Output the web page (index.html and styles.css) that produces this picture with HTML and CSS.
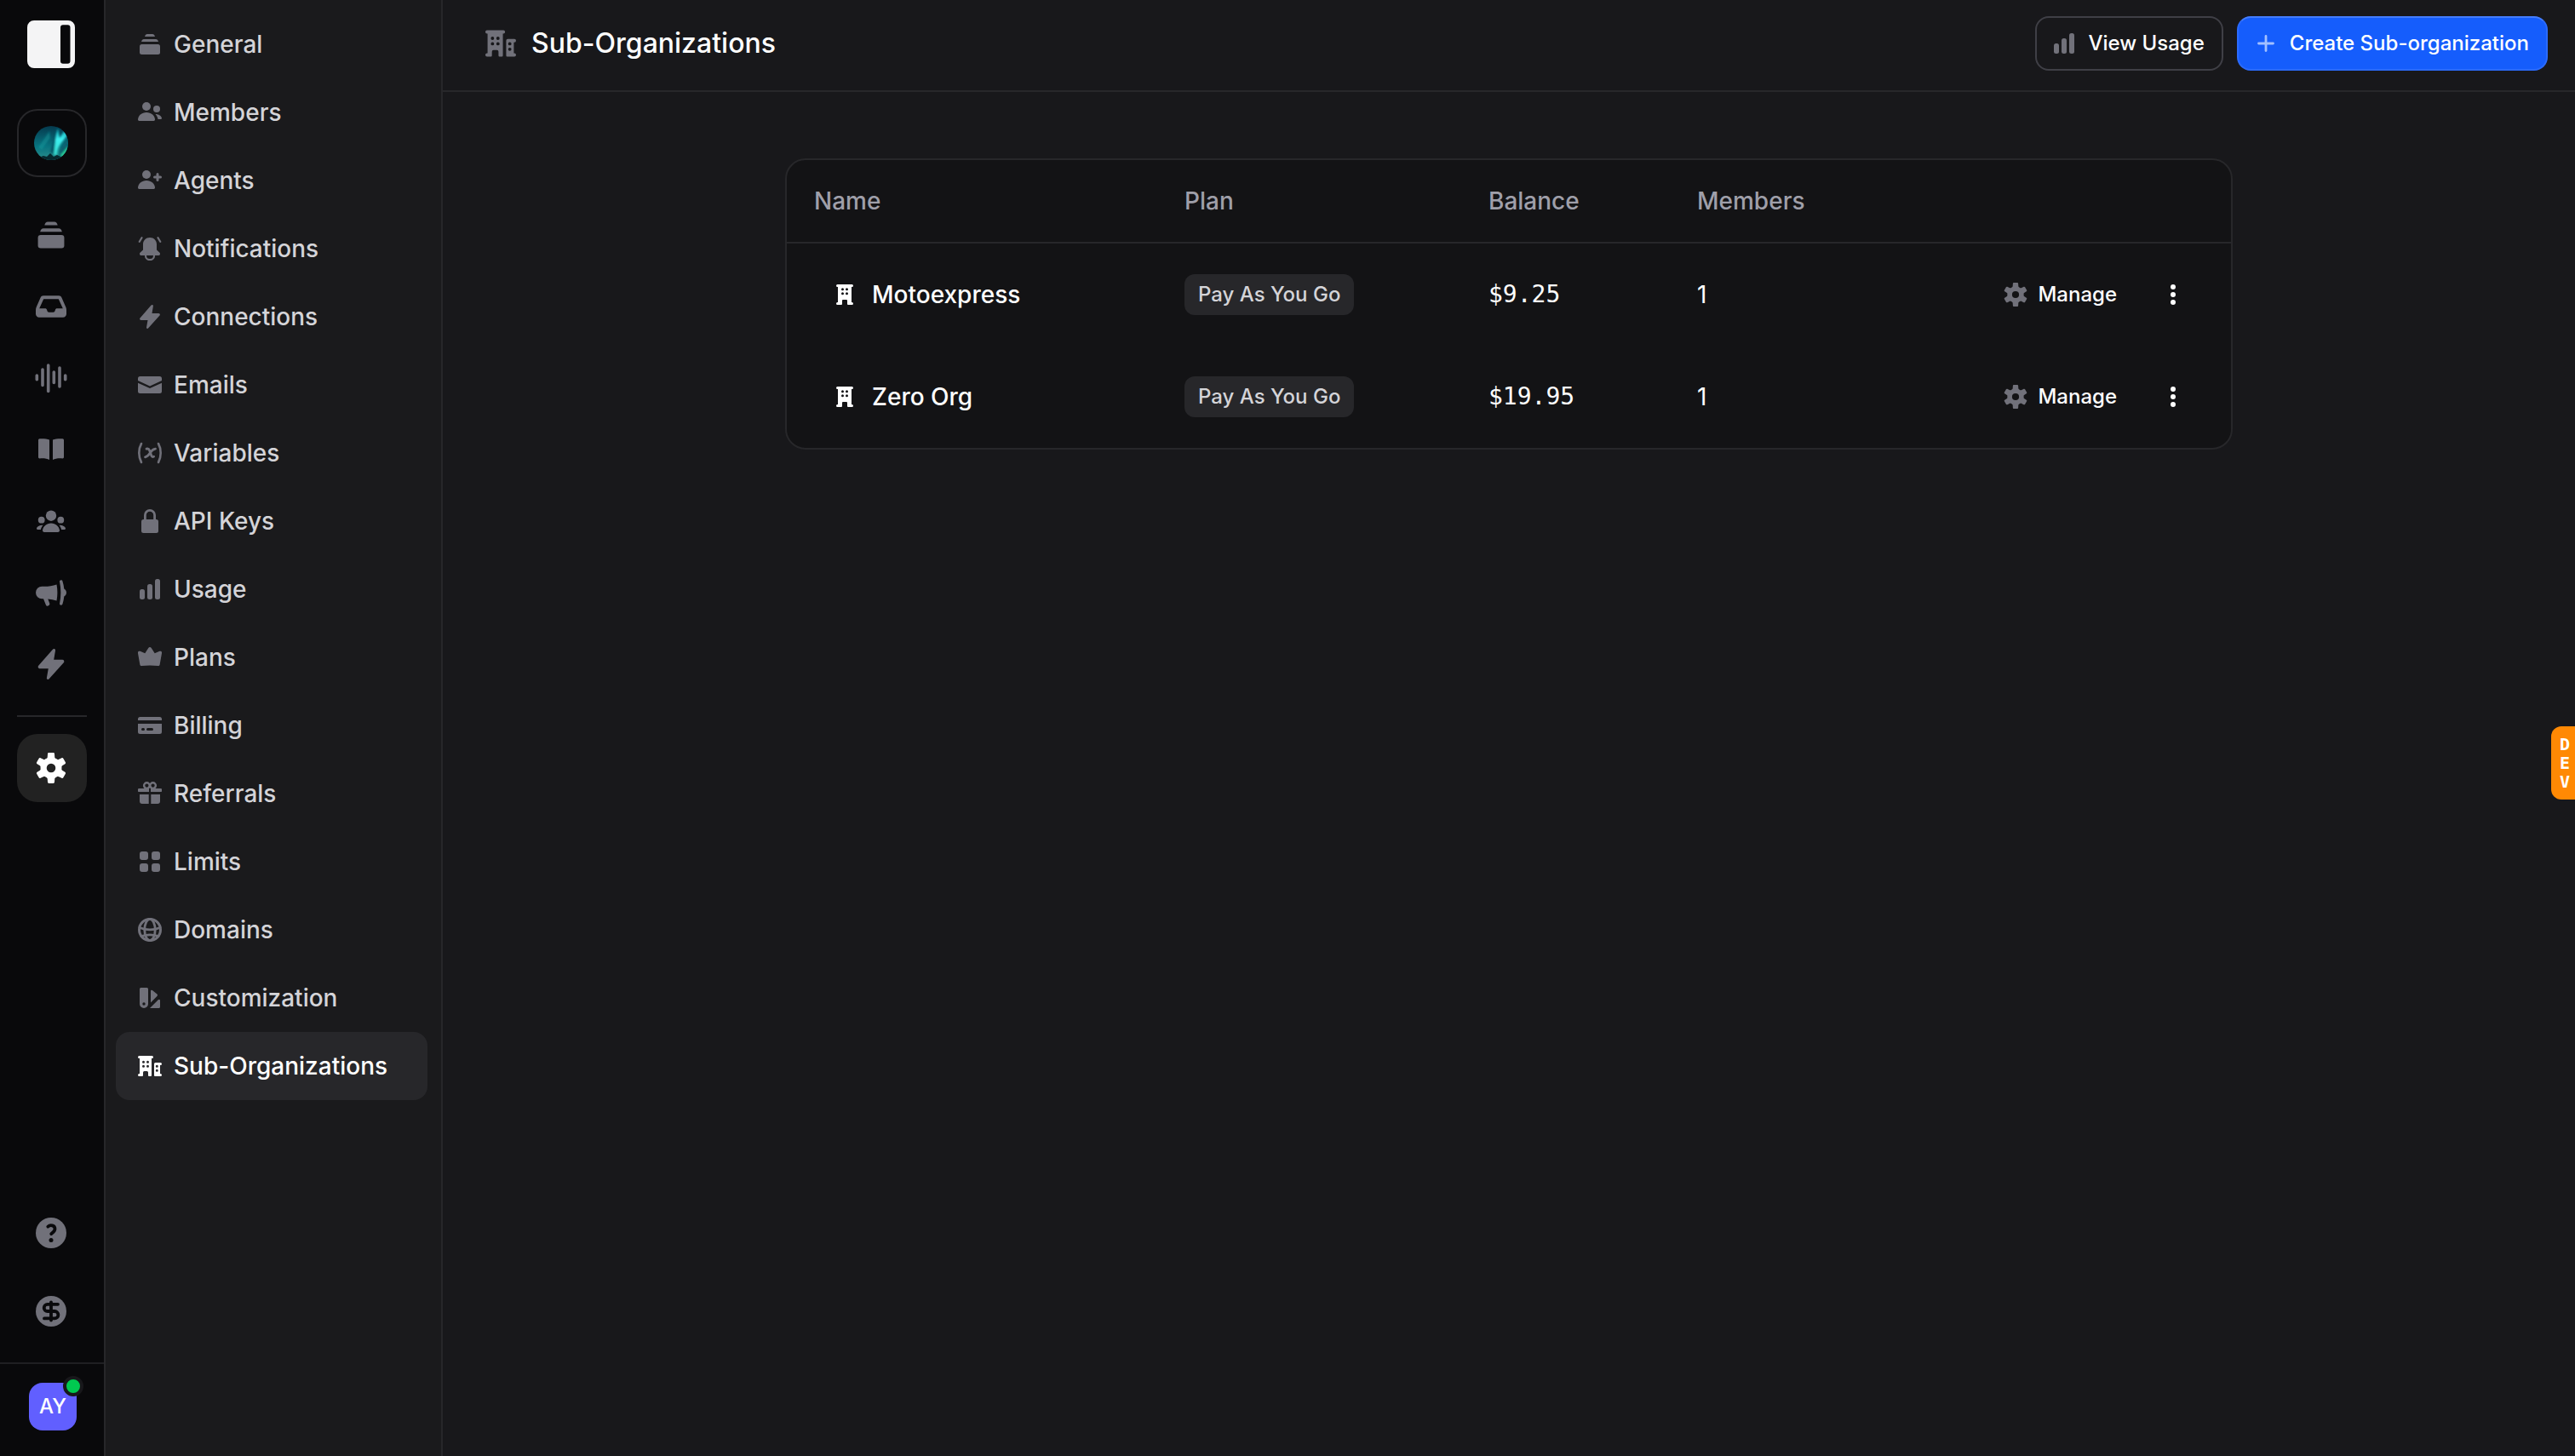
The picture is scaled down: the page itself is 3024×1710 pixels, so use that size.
FILE: index.html
```
<!DOCTYPE html>
<html lang="en">

<head>
	<meta charset="UTF-8">
	<meta name="viewport" content="width=device-width, initial-scale=1.0">
	<title>Sub-Organizations</title>
	<link rel="stylesheet" href="styles.css">
</head>

<body>
	<!-- Icon sprite -->
	<svg class="sprite" aria-hidden="true">
		<symbol id="i-stack" viewBox="0 0 28 28">
			<path d="M8 5c.5-2 1.500-3 3-3h6c1.500 0 2.500 1 3 3zM4 11c.5-2 1.500-3 3-3h14c1.500 0 2.500 1 3 3z" />
			<rect x="2" y="14" width="24" height="12" rx="2.500" />
		</symbol>
		<symbol id="i-members" viewBox="0 0 28 28">
			<circle cx="10" cy="7" r="5" />
			<path d="M10 14c-5.500 0-10 4-10 8.600 0 .8.6 1.400 1.400 1.400h17.200c.8 0 1.400-.6 1.400-1.400C20 18 15.500 14 10 14z" />
			<circle cx="22" cy="10" r="4" />
			<path d="M20.500 16c4 0 7 2.200 7.500 4.700.1.800-.4 1.300-1.200 1.300h-3.300c-.4-2.400-1.500-4.500-3-6z" />
		</symbol>
		<symbol id="i-agents" viewBox="0 0 28 28">
			<circle cx="10" cy="7" r="5" />
			<path d="M10 14c-5.500 0-10 4-10 8.600 0 .8.6 1.400 1.400 1.400h17.200c.8 0 1.400-.6 1.400-1.400C20 18 15.500 14 10 14z" />
			<path class="line" stroke-width="3" d="M23 6.500v7M19.500 10h7" />
		</symbol>
		<symbol id="i-bell" viewBox="0 0 28 28">
			<path d="M14 1c-4.600 0-8 3.500-8 8v6.500l-3.500 3.300c-1.200 1.300-.4 3.200 1.200 3.200h20.600c1.600 0 2.400-1.900 1.200-3.200L22 15.500V9c0-4.500-3.400-8-8-8z" />
			<path class="line" stroke-width="2.200" d="M9 22.500a5 4.600 0 0 0 10 0M4.500 1.200 1.800 5.800M23.500 1.200l2.700 4.600" />
		</symbol>
		<symbol id="i-bolt" viewBox="0 0 28 28">
			<path d="M15.500.6 2.500 15.400C1.600 16.500 2.200 18 3.600 18H11.500l-1.500 8.600c-.2 1.200 1.200 1.900 2 1L25.500 12.600c.9-1 .2-2.600-1.200-2.600H16.500L17.900 1.500C18.100.1 16.400-.5 15.500.6z" />
		</symbol>
		<symbol id="i-mail" viewBox="0 0 28 28">
			<path d="M0 9V6.500A2.500 2.500 0 0 1 2.500 4h23A2.500 2.500 0 0 1 28 6.500V9l-14 6.500z" />
			<path d="m0 11.800 14 6.200 14-6.200v9.700a2.500 2.500 0 0 1-2.500 2.500h-23A2.500 2.500 0 0 1 0 21.500z" />
		</symbol>
		<symbol id="i-variable" viewBox="0 0 28 28">
			<path class="line" stroke-width="2.600" d="M4 3C.4 9.500.4 18.500 4 25M24 3c3.600 6.500 3.600 15.500 0 22" />
			<path class="line" stroke-width="2.800" d="M10 9.200c2-.6 3 .3 3.600 1.900l2 5.400c.5 1.500 1.200 2.500 3 1.800M20.500 9.200c-3 .3-4.500 2-6.300 4.800s-3 4.300-5.700 4.800" />
		</symbol>
		<symbol id="i-lock" viewBox="0 0 28 28">
			<rect x="4" y="12" width="20" height="16" rx="2.500" />
			<path class="line" stroke-width="2.800" d="M8.400 14V7a5.600 5.600 0 0 1 11.200 0v7" />
		</symbol>
		<symbol id="i-chart" viewBox="0 0 28 28">
			<rect x="2" y="14" width="6" height="12" rx="2.500" />
			<rect x="11" y="8" width="6" height="18" rx="2.500" />
			<rect x="20" y="2" width="6" height="24" rx="2.500" />
		</symbol>
		<symbol id="i-crown" viewBox="0 0 28 28">
			<path d="M12.300 2.900c.8-1.200 2.600-1.200 3.400 0l4 6.400 5.800-2.500c1.400-.6 2.900.5 2.600 2l-2.500 13.900c-.2 1-1.100 1.600-2.100 1.400-6.300-.8-12.700-.8-19 0-1 .2-1.900-.4-2.100-1.400L-.1 8.800c-.3-1.500 1.200-2.600 2.600-2l5.800 2.500z" />
		</symbol>
		<symbol id="i-card" viewBox="0 0 28 28">
			<path d="M0 8V6.500A2.500 2.500 0 0 1 2.500 4h23A2.500 2.500 0 0 1 28 6.500V8z" />
			<path fill-rule="evenodd" d="M0 12h28v9.500a2.500 2.500 0 0 1-2.500 2.500h-23A2.500 2.500 0 0 1 0 21.500zM5.500 17a1.500 1.500 0 0 0 0 3h1a1.500 1.500 0 0 0 0-3zM11.500 17a1.500 1.500 0 0 0 0 3h5a1.500 1.500 0 0 0 0-3z" />
		</symbol>
		<symbol id="i-gift" viewBox="0 0 28 28">
			<path d="M1.500 8H13v4H1.500a2 2 0 0 1 0-4zM15 8h11.500a2 2 0 0 1 0 4H15zM2 15h10.700v11H5a3 3 0 0 1-3-3zM15.300 15H26v8a3 3 0 0 1-3 3h-7.700z" />
			<circle class="line" stroke-width="2.400" cx="10.400" cy="4.600" r="3.300" />
			<circle class="line" stroke-width="2.400" cx="17.600" cy="4.600" r="3.300" />
		</symbol>
		<symbol id="i-grid" viewBox="0 0 28 28">
			<rect x="2" y="2" width="10" height="10" rx="3" />
			<rect x="16" y="2" width="10" height="10" rx="3" />
			<rect x="2" y="16" width="10" height="10" rx="3" />
			<rect x="16" y="16" width="10" height="10" rx="3" />
		</symbol>
		<symbol id="i-globe" viewBox="0 0 28 28">
			<circle class="line" stroke-width="3" cx="14" cy="14" r="12.500" />
			<ellipse class="line" stroke-width="2.800" cx="14" cy="14" rx="6.200" ry="12.600" />
			<path class="line" stroke-width="2.800" d="M2 11.500c7.500 3 16.500 3 24 0M4 21.500c6.500-2.200 13.500-2.200 20 0" />
		</symbol>
		<symbol id="i-swatch" viewBox="0 0 28 28">
			<path fill-rule="evenodd" d="M3.500 2h7A1.500 1.500 0 0 1 12 3.500V21a5 5 0 0 1-10 0V3.500A1.500 1.500 0 0 1 3.500 2zM7 19.300a1.700 1.700 0 1 0 0 3.400 1.700 1.700 0 0 0 0-3.400z" />
			<path d="M15 6c0-1.300 1.300-1.600 2.200-.7l5.200 4.200c.8.7.8 1.600 0 2.400L15 19.500zM14 26l9.300-9.300c.6-.6 1-.7 1.700-.7.700 0 1 .5 1 1.200v7.300c0 .9-.6 1.500-1.500 1.500z" />
		</symbol>
		<symbol id="i-buildings" viewBox="0 0 28 28">
			<path fill-rule="evenodd" d="M1.500 2h15a1.500 1.500 0 0 1 0 3H16v20a1 1 0 0 1-1 1h-2a1 1 0 0 1-1-1v-3.500A1.500 1.500 0 0 0 10.500 20h-3A1.500 1.500 0 0 0 6 21.500V25a1 1 0 0 1-1 1H1.500a1.500 1.500 0 0 1 0-3H2V5h-.5a1.500 1.500 0 0 1 0-3zM6.500 7.800a1.500 1.500 0 1 0 0 3 1.500 1.500 0 0 0 0-3zM11.500 7.800a1.500 1.500 0 1 0 0 3 1.500 1.500 0 0 0 0-3zM6.500 12.800a1.500 1.500 0 1 0 0 3 1.500 1.500 0 0 0 0-3zM11.500 12.800a1.500 1.500 0 1 0 0 3 1.500 1.500 0 0 0 0-3z" />
			<path fill-rule="evenodd" d="M20.500 10h6a1.500 1.500 0 0 1 0 3H26v10h.5a1.500 1.500 0 0 1 0 3H20a1 1 0 0 1-1-1V11.500a1.500 1.500 0 0 1 1.500-1.500zM22.300 12.800a1.500 1.500 0 1 0 0 3 1.500 1.500 0 0 0 0-3zM22.300 17.800a1.500 1.500 0 1 0 0 3 1.500 1.500 0 0 0 0-3z" />
		</symbol>
		<symbol id="i-office" viewBox="0 0 28 28">
			<path fill-rule="evenodd" d="M5.500 2h17a1.500 1.500 0 0 1 0 3H22v18h.5a1.500 1.500 0 0 1 0 3H18a1 1 0 0 1-1-1v-4a1 1 0 0 0-1-1h-4a1 1 0 0 0-1 1v4a1 1 0 0 1-1 1H5.500a1.500 1.500 0 0 1 0-3H6V5h-.5a1.500 1.500 0 0 1 0-3zM11.500 6.300a1.500 1.500 0 1 0 0 3 1.500 1.500 0 0 0 0-3zM16.500 6.300a1.500 1.500 0 1 0 0 3 1.500 1.500 0 0 0 0-3zM11.500 11.300a1.500 1.500 0 1 0 0 3 1.500 1.500 0 0 0 0-3zM16.500 11.300a1.500 1.500 0 1 0 0 3 1.500 1.500 0 0 0 0-3z" />
		</symbol>
		<symbol id="i-gear" viewBox="0 0 28 28">
			<circle class="line" stroke-width="5.600" cx="14" cy="14" r="6.900" />
			<g id="teeth">
				<path id="tooth" d="M9 6.500c1.300-.8 1.600-1.400 1.700-2.700l.2-2.700C11 .4 11.300 0 12 0h4c.7 0 1 .4 1.100 1.100l.2 2.700c.1 1.300.4 1.900 1.700 2.700z" />
				<use href="#tooth" transform="rotate(60 14 14)" />
				<use href="#tooth" transform="rotate(120 14 14)" />
				<use href="#tooth" transform="rotate(180 14 14)" />
				<use href="#tooth" transform="rotate(240 14 14)" />
				<use href="#tooth" transform="rotate(300 14 14)" />
			</g>
		</symbol>
		<symbol id="i-dots" viewBox="0 0 28 28">
			<circle cx="14" cy="5" r="3" />
			<circle cx="14" cy="14" r="3" />
			<circle cx="14" cy="23" r="3" />
		</symbol>
		<symbol id="i-plus" viewBox="0 0 28 28">
			<path class="line" stroke-width="2.800" d="M14 5.500v17M5.500 14h17" />
		</symbol>
		<symbol id="i-inbox" viewBox="0 0 36 36">
			<path fill-rule="evenodd" d="M9 5.300h18c1.600 0 2.800.8 3.400 2.200L35 18c.7 1.500 1 2.600 1 4v4.700c0 2.300-1.700 4-4 4H4c-2.300 0-4-1.700-4-4V22c0-1.400.3-2.500 1-4L5.600 7.500C6.200 6.100 7.400 5.300 9 5.300zM9.200 9.300l-5 11H11c1.200 0 1.700.6 2.200 1.900.6 1.800 1 2.500 2.400 2.500h4.800c1.400 0 1.800-.7 2.400-2.500.5-1.300 1-1.900 2.200-1.900h6.800l-5-11z" />
		</symbol>
		<symbol id="i-wave" viewBox="0 0 36 36" overflow="visible">
			<path class="line" stroke-width="3.600" d="M1.300 15v4.700M8 8v18.500M14.700 3v30.500M21.300 11v12.500M28 6v22M34.700 15v4.700" />
		</symbol>
		<symbol id="i-book" viewBox="0 0 36 36">
			<path d="M3 7c0-1 .6-1.600 1.600-1.700C9 5 13 5.400 16 6.600V30c-3-1.600-7-2-11.400-1.600-1 0-1.600-.6-1.600-1.600zM33 7c0-1-.6-1.600-1.600-1.700C27 5 23 5.400 20 6.600V30c3-1.600 7-2 11.400-1.600 1 0 1.600-.6 1.600-1.600z" />
		</symbol>
		<symbol id="i-group" viewBox="0 0 36 36">
			<circle cx="18" cy="11.700" r="6.200" />
			<circle cx="6.700" cy="16.700" r="3.900" />
			<circle cx="29.300" cy="16.700" r="3.900" />
			<path d="M18 20.500c-5.300 0-9.400 3.800-10 8.300-.1 1.300.7 2.200 2 2.200h16c1.300 0 2.100-.9 2-2.200-.6-4.500-4.700-8.300-10-8.300zM8.500 22.800c-4.200-.2-7 1.600-7.500 3.800-.2.900.4 1.400 1.300 1.400h3.600c.4-2 1.300-3.700 2.600-5.200zM27.500 22.800c4.200-.2 7 1.600 7.500 3.800.2.900-.4 1.400-1.300 1.400h-3.600c-.4-2-1.300-3.700-2.600-5.200z" />
		</symbol>
		<symbol id="i-megaphone" viewBox="0 0 36 36">
			<path d="M7.300 10.700C13 11 19 10.500 24.500 8.500c1.200 6.300 1.200 12.700 0 19-3.300-1.200-6.700-1.900-10.200-2.100l1.900 5.200c.4 1 .1 1.800-.8 2.400l-1 .6c-1 .5-2 .2-2.400-.8L9 25.300H7.300a7.300 7.300 0 0 1 0-14.600z" />
			<path d="M28 5c-.3-1.700 2.700-2.600 3.400-.6 1 3 1.600 6 1.900 9.100 1.400.9 2.700 2.500 2.700 4.500s-1.300 3.600-2.700 4.500c-.3 3.100-.9 6.100-1.900 9.100-.7 2-3.700 1.100-3.400-.6 1.800-8.700 1.800-17.300 0-26z" />
		</symbol>
		<symbol id="i-help" viewBox="0 0 36 36">
			<circle cx="18" cy="18" r="18" />
			<path class="cut" d="M14.300 10.600c3-2.800 8.200-1.200 8.200 2.600 0 3-2.500 4.200-4.300 5.900" />
			<circle class="cut-dot" cx="18" cy="26.500" r="2.500" />
		</symbol>
		<symbol id="i-dollar" viewBox="0 0 36 36">
			<circle cx="18" cy="18" r="18" />
			<path class="cut" d="M18 7.500v21M26 9.800H13.800a4.100 4.100 0 0 0 0 8.200h8.400a4.200 4.200 0 0 1 0 8.400H10" />
		</symbol>
		<symbol id="i-logo" viewBox="0 0 56 56">
			<path fill-rule="evenodd" d="M8 0h40a8 8 0 0 1 8 8v40a8 8 0 0 1-8 8H8a8 8 0 0 1-8-8V8a8 8 0 0 1 8-8zM42 5.300a3 3 0 0 0-3 3v39.400a3 3 0 0 0 3 3h5.500a3 3 0 0 0 3-3V8.300a3 3 0 0 0-3-3z" />
		</symbol>
	</svg>

	<div class="app">
		<!-- Icon rail -->
		<nav class="rail" aria-label="Workspace">
			<a class="logo" href="#" aria-label="Home"><svg><use href="#i-logo" /></svg></a>
			<button class="workspace" type="button" aria-label="Switch workspace">
				<svg class="aurora" viewBox="0 0 40 40">
					<defs>
						<linearGradient id="sky" x1="0" y1="0" x2="0" y2="1">
							<stop offset="0" stop-color="#053a4e" />
							<stop offset=".6" stop-color="#087480" />
							<stop offset="1" stop-color="#2a8f8c" />
						</linearGradient>
						<linearGradient id="glow" x1="0" y1="0" x2="0" y2="1">
							<stop offset="0" stop-color="#0a9bab" />
							<stop offset=".4" stop-color="#3df0f0" />
							<stop offset="1" stop-color="#35d8cc" />
						</linearGradient>
						<clipPath id="disc"><circle cx="20" cy="20" r="20" /></clipPath>
						<filter id="soft"><feGaussianBlur stdDeviation="1" /></filter>
					</defs>
					<g clip-path="url(#disc)">
						<rect width="40" height="40" fill="url(#sky)" />
						<g filter="url(#soft)">
							<path fill="#0f9a9d" opacity=".5" d="M18 6 5 25l4 3 10-14z" />
							<path fill="#04475c" opacity=".7" d="m27 0-5 20-3 10 4 4 4-20 5-14z" />
							<path fill="url(#glow)" d="M28 3c-3 8-3 16-5 31h4c0-6 2-10 5-14l7-9-3-6-6 9z" />
							<path fill="#076070" d="m40 14-9 12-2 10h8z" />
							<path fill="#28c995" d="m40 24-9 10 2 3h7z" />
						</g>
						<path fill="#06292f" d="m5 37 6-2 4 1 4-4 4 4 4-2 6 3 4 3H5z" />
					</g>
				</svg>
			</button>

			<div class="rail-links">
				<a href="#" aria-label="Overview"><svg class="icon-lg"><use href="#i-stack" /></svg></a>
				<a href="#" aria-label="Inbox"><svg class="icon-lg"><use href="#i-inbox" /></svg></a>
				<a href="#" aria-label="Calls"><svg class="icon-lg"><use href="#i-wave" /></svg></a>
				<a href="#" aria-label="Knowledge"><svg class="icon-lg"><use href="#i-book" /></svg></a>
				<a href="#" aria-label="Contacts"><svg class="icon-lg"><use href="#i-group" /></svg></a>
				<a href="#" aria-label="Campaigns"><svg class="icon-lg"><use href="#i-megaphone" /></svg></a>
				<a href="#" aria-label="Automations"><svg class="icon-lg"><use href="#i-bolt" /></svg></a>
			</div>
			<hr>
			<div class="rail-links">
				<a class="active" href="#" aria-label="Settings"><svg class="icon-lg"><use href="#i-gear" /></svg></a>
			</div>

			<div class="rail-help">
				<a href="#" aria-label="Help"><svg class="icon-lg"><use href="#i-help" /></svg></a>
				<a href="#" aria-label="Balance"><svg class="icon-lg"><use href="#i-dollar" /></svg></a>
			</div>
			<div class="rail-user">
				<button class="user" type="button">AY<span class="online"></span></button>
			</div>
		</nav>

		<!-- Settings menu -->
		<nav class="menu" aria-label="Settings">
			<a href="#"><svg class="icon"><use href="#i-stack" /></svg>General</a>
			<a href="#"><svg class="icon"><use href="#i-members" /></svg>Members</a>
			<a href="#"><svg class="icon"><use href="#i-agents" /></svg>Agents</a>
			<a href="#"><svg class="icon"><use href="#i-bell" /></svg>Notifications</a>
			<a href="#"><svg class="icon"><use href="#i-bolt" /></svg>Connections</a>
			<a href="#"><svg class="icon"><use href="#i-mail" /></svg>Emails</a>
			<a href="#"><svg class="icon"><use href="#i-variable" /></svg>Variables</a>
			<a href="#"><svg class="icon"><use href="#i-lock" /></svg>API Keys</a>
			<a href="#"><svg class="icon"><use href="#i-chart" /></svg>Usage</a>
			<a href="#"><svg class="icon"><use href="#i-crown" /></svg>Plans</a>
			<a href="#"><svg class="icon"><use href="#i-card" /></svg>Billing</a>
			<a href="#"><svg class="icon"><use href="#i-gift" /></svg>Referrals</a>
			<a href="#"><svg class="icon"><use href="#i-grid" /></svg>Limits</a>
			<a href="#"><svg class="icon"><use href="#i-globe" /></svg>Domains</a>
			<a href="#"><svg class="icon"><use href="#i-swatch" /></svg>Customization</a>
			<a class="active" href="#" aria-current="page"><svg class="icon"><use href="#i-buildings" /></svg>Sub-Organizations</a>
		</nav>

		<main class="main">
			<header class="header">
				<h1><svg class="icon-lg"><use href="#i-buildings" /></svg>Sub-Organizations</h1>
				<button class="btn" type="button"><svg class="icon"><use href="#i-chart" /></svg>View Usage</button>
				<button class="btn btn-primary" type="button"><svg class="icon"><use href="#i-plus" /></svg>Create Sub-organization</button>
			</header>

			<div class="content">
				<div class="card">
					<table>
						<thead>
							<tr>
								<th class="col-name">Name</th>
								<th class="col-plan">Plan</th>
								<th class="col-balance">Balance</th>
								<th>Members</th>
								<th aria-label="Actions"></th>
							</tr>
						</thead>
						<tbody>
							<tr>
								<td><a class="org" href="#"><svg class="icon"><use href="#i-office" /></svg>Motoexpress</a></td>
								<td><span class="tag">Pay As You Go</span></td>
								<td class="mono">$9.25</td>
								<td>1</td>
								<td>
									<div class="actions">
										<button class="manage" type="button"><svg class="icon"><use href="#i-gear" /></svg>Manage</button>
										<button class="more" type="button" aria-label="More actions"><svg class="icon"><use href="#i-dots" /></svg></button>
									</div>
								</td>
							</tr>
							<tr>
								<td><a class="org" href="#"><svg class="icon"><use href="#i-office" /></svg>Zero Org</a></td>
								<td><span class="tag">Pay As You Go</span></td>
								<td class="mono">$19.95</td>
								<td>1</td>
								<td>
									<div class="actions">
										<button class="manage" type="button"><svg class="icon"><use href="#i-gear" /></svg>Manage</button>
										<button class="more" type="button" aria-label="More actions"><svg class="icon"><use href="#i-dots" /></svg></button>
									</div>
								</td>
							</tr>
						</tbody>
					</table>
				</div>
			</div>
		</main>
	</div>

	<div class="dev"><span>D</span><span>E</span><span>V</span></div>
</body>

</html>
```
FILE: styles.css
```
* {
	box-sizing: border-box;
}

body {
	margin: 0;
	font-family: Inter, "Liberation Sans", sans-serif;
	font-size: 28px;
	line-height: 40px;
	color: #fff;
	background-color: #18181b;
}

a {
	color: inherit;
	text-decoration: none;
}

button {
	padding: 0;
	border: none;
	background: none;
	font: inherit;
	color: inherit;
	cursor: pointer;
}

.sprite {
	position: absolute;
	width: 0;
	height: 0;
}

.icon,
.icon-lg {
	flex: none;
	display: block;
	width: 28px;
	height: 28px;
	fill: currentColor;
	color: #71717a;
	overflow: visible;
}

.icon-lg {
	width: 36px;
	height: 36px;
}

.line {
	fill: none;
	stroke: currentColor;
	stroke-linecap: round;
	stroke-linejoin: round;
}

.cut {
	fill: none;
	stroke: #09090b;
	stroke-width: 3.8;
	stroke-linecap: round;
	stroke-linejoin: round;
}

.cut-dot {
	fill: #09090b;
}

.app {
	display: flex;
	min-height: 100vh;
}

/* Icon rail */
.rail {
	flex: none;
	display: flex;
	flex-direction: column;
	width: 124px;
	background-color: #09090b;
	border-right: 2px solid #27272a;
}

.logo {
	margin: 24px 32px 48px;
}

.logo svg {
	display: block;
	width: 56px;
	height: 56px;
	fill: #f4f4f5;
}

.workspace {
	display: flex;
	align-items: center;
	height: 80px;
	margin: 0 20px 28px;
	padding-left: 18px;
	border: 2px solid #27272a;
	border-radius: 24px;
}

.aurora {
	width: 40px;
	height: 40px;
}

.rail-links {
	display: flex;
	flex-direction: column;
	gap: 4px;
	padding: 0 20px;
}

.rail-links a {
	display: flex;
	align-items: center;
	height: 80px;
	padding-left: 22px;
	border-radius: 24px;
}

.rail-links .active {
	background-color: #222;
}

.rail-links .active svg {
	color: #fff;
}

.rail hr {
	width: 82px;
	height: 2px;
	margin: 20px;
	border: none;
	background-color: #27272a;
}

.rail-help {
	display: flex;
	flex-direction: column;
	gap: 56px;
	margin-top: auto;
	padding: 0 42px 42px;
}

.rail-user {
	height: 110px;
	padding: 22px 34px;
	border-top: 2px solid #1f1f22;
}

.user {
	position: relative;
	width: 56px;
	height: 56px;
	border-radius: 16px;
	background-color: #615fff;
	font-size: 24px;
	font-weight: 500;
}

.online {
	position: absolute;
	top: -8px;
	right: -8px;
	width: 24px;
	height: 24px;
	border: 4px solid #18181b;
	border-radius: 50%;
	background-color: #00c950;
}

/* Settings menu */
.menu {
	flex: none;
	width: 396px;
	padding: 12px 16px 12px 12px;
	background-color: #1a1a1c;
	border-right: 2px solid #27272a;
}

.menu a {
	display: flex;
	align-items: center;
	gap: 14px;
	height: 80px;
	padding: 0 26px;
	border-radius: 16px;
	font-weight: 500;
	color: #d4d4d8;
}

.menu .active {
	background-color: #27272a;
	color: #fff;
}

.menu .active svg {
	color: #fff;
}

/* Page */
.main {
	flex: 1;
	min-width: 0;
}

.header {
	display: flex;
	align-items: center;
	gap: 16px;
	padding: 19px 32px 23px 50px;
	border-bottom: 2px solid #27272a;
}

.header h1 {
	display: flex;
	align-items: center;
	gap: 18px;
	margin: 0 auto 0 0;
	font-size: 32px;
	font-weight: 500;
}

.btn {
	display: flex;
	align-items: center;
	gap: 14px;
	height: 64px;
	padding: 0 20px 0 18px;
	border: 2px solid #3f3f46;
	border-radius: 16px;
	font-size: 24px;
	font-weight: 500;
}

.btn-primary {
	border-color: #2b6bff;
	border-top-color: #447dff;
	background-color: #155dfc;
}

.btn-primary svg {
	color: #a3c0ff;
}

.content {
	padding: 78px 40px;
}

.card {
	max-width: 1700px;
	margin: 0 auto;
	border: 2px solid #27272a;
	border-radius: 24px;
	background-color: #131315;
}

table {
	width: 100%;
	border-collapse: separate;
	border-spacing: 0;
	table-layout: fixed;
}

th {
	height: 98px;
	padding: 0 32px;
	border-bottom: 2px solid #27272a;
	font-weight: 500;
	text-align: left;
	color: #9f9fa9;
}

td {
	height: 120px;
	padding: 0 32px;
}

.col-name {
	width: 435px;
}

.col-plan {
	width: 357px;
}

.col-balance {
	width: 245px;
}

.org {
	display: flex;
	align-items: center;
	gap: 18px;
	padding-left: 22px;
	font-weight: 500;
}

.org svg,
.more svg {
	color: #fff;
}

.tag {
	display: inline-block;
	padding: 4px 16px;
	border-radius: 12px;
	background-color: #27272a;
	font-size: 24px;
	font-weight: 500;
	color: #d4d4d8;
}

.mono {
	font-family: "DejaVu Sans Mono", monospace;
}

.actions {
	display: flex;
	align-items: center;
	justify-content: flex-end;
	gap: 52px;
	padding-right: 22px;
}

.manage {
	display: flex;
	align-items: center;
	gap: 12px;
	font-size: 24px;
	font-weight: 500;
}

/* Environment tab */
.dev {
	position: fixed;
	top: 853px;
	right: 0;
	display: flex;
	flex-direction: column;
	padding: 10px 6px 10px 10px;
	border-radius: 12px 0 0 12px;
	background-color: #ff8904;
	font-family: "DejaVu Sans Mono", monospace;
	font-size: 20px;
	font-weight: 700;
	line-height: 22px;
}
```
